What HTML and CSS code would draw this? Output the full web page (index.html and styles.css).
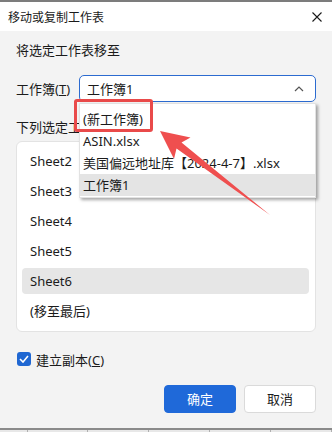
FILE: index.html
```html
<!DOCTYPE html>
<html>
<head lang="zh">
    <meta charset="UTF-8">
    <title>移动或复制工作表</title>
    <link rel="stylesheet" href="styles.css">
</head>
<body>
<div id="dialog">
    <div class="titlebar">
        <span class="title">移动或复制工作表</span>
        <svg class="close" width="10" height="10" viewBox="0 0 10 10">
            <path d="M0.5 0.5 L9.5 9.5 M9.5 0.5 L0.5 9.5" stroke="#1a1a1a" stroke-width="1.1" fill="none"/>
        </svg>
    </div>
    <div class="main">
        <div class="caption">将选定工作表移至</div>
        <div class="book-row">
            <span class="label">工作簿(<u>T</u>)</span>
            <div class="combo">
                <span>工作簿1</span>
                <svg width="10" height="6" viewBox="0 0 10 6">
                    <path d="M1 5 L5 1 L9 5" stroke="#555" stroke-width="1.2" fill="none"/>
                </svg>
            </div>
        </div>
        <div class="list-label">下列选定工作表之前(<u>B</u>):</div>
        <ul class="sheets">
            <li>Sheet2</li>
            <li>Sheet3</li>
            <li>Sheet4</li>
            <li>Sheet5</li>
            <li class="current">Sheet6</li>
            <li>(移至最后)</li>
        </ul>
        <div class="copy-row">
            <span class="check">
                <svg width="10" height="8" viewBox="0 0 10 8">
                    <path d="M1 4 L4 7 L9 1" stroke="#fff" stroke-width="1.6" fill="none"/>
                </svg>
            </span>
            <span>建立副本(<u>C</u>)</span>
        </div>
        <div class="buttons">
            <span class="btn primary">确定</span>
            <span class="btn">取消</span>
        </div>
    </div>

    <ul class="dropdown">
        <li>(新工作簿)</li>
        <li>ASIN.xlsx</li>
        <li>美国偏远地址库【2024-4-7】.xlsx</li>
        <li class="hover">工作簿1</li>
    </ul>
    <div class="mark"></div>
    <svg class="arrow" width="332" height="428" viewBox="0 0 332 428">
        <polygon points="160,131 190.5,137.5 181.5,142.5 270,215 176.5,148.5 174,159" fill="#ef4f4f"/>
    </svg>
</div>
<div class="sheetbar">
    <span></span><span></span><span></span><span></span><span></span><span></span>
</div>
</body>
</html>
```

FILE: styles.css
```css
* {
    margin: 0;
    padding: 0;
    box-sizing: border-box;
}
ul {
    list-style: none;
}
body {
    width: 332px;
    height: 432px;
    overflow: hidden;
    font-family: "Noto Sans", "Noto Sans CJK SC", sans-serif;
    font-size: 13px;
    color: #1b1b1b;
    background: #f3f3f3;
}
#dialog {
    position: relative;
    height: 430px;
    border-top: 2px solid #7c7c7c;
    border-bottom: 2px solid #8a8a8a;
    background: #f3f3f3;
}
.titlebar {
    height: 29px;
    background: #fff;
    display: flex;
    align-items: center;
    justify-content: space-between;
    padding: 0 10px 0 8px;
}
.title {
    font-size: 12px;
}
.main {
    padding: 0 16px;
}
.caption {
    margin-top: 9px;
    line-height: 20px;
}
.book-row {
    margin-top: 15px;
    display: flex;
    align-items: center;
}
.label {
    width: 63px;
}
.combo {
    flex: 1;
    height: 27px;
    background: #fff;
    border: 1px solid #2c6bd0;
    border-radius: 5px;
    display: flex;
    align-items: center;
    justify-content: space-between;
    padding: 0 11px 0 7px;
}
.list-label {
    margin-top: 15px;
    line-height: 20px;
}
.sheets {
    margin-top: 4px;
    height: 191px;
    background: #fff;
    border: 1px solid #e3e3e3;
    border-radius: 6px;
    padding: 6px 6px 0 5px;
    display: flex;
    flex-direction: column;
    gap: 4px;
}
.sheets li {
    height: 26px;
    line-height: 26px;
    padding-left: 8px;
    border-radius: 4px;
}
.sheets li.current {
    background: #e6e6e6;
}
.copy-row {
    margin-top: 17px;
    height: 20px;
    display: flex;
    align-items: center;
    padding-left: 1px;
}
.check {
    width: 14px;
    height: 14px;
    border-radius: 3px;
    background: #1f67d2;
    display: flex;
    align-items: center;
    justify-content: center;
    margin-right: 5px;
}
.buttons {
    margin-top: 16px;
    display: flex;
    justify-content: flex-end;
    gap: 8px;
}
.btn {
    width: 72px;
    height: 28px;
    line-height: 26px;
    text-align: center;
    border-radius: 4px;
    background: #fff;
    border: 1px solid #dadada;
}
.btn.primary {
    background: #1f69d9;
    border-color: #1f69d9;
    color: #fff;
}
.dropdown {
    position: absolute;
    left: 79px;
    top: 101px;
    width: 237px;
    height: 95px;
    background: #fff;
    border: 1px solid #e2e2e2;
    box-shadow: 2px 2px 3px rgba(0, 0, 0, 0.35);
    padding-top: 4px;
}
.dropdown li {
    height: 22px;
    line-height: 22px;
    padding-left: 3px;
    white-space: nowrap;
}
.dropdown li.hover {
    background: #e4e4e4;
}
.mark {
    position: absolute;
    left: 74px;
    top: 97px;
    width: 79px;
    height: 33px;
    border: 3px solid #e94a4a;
    border-radius: 3px;
}
.arrow {
    position: absolute;
    left: 0;
    top: -2px;
}
.sheetbar {
    height: 2px;
    display: flex;
    background: #e8e8e8;
}
.sheetbar span {
    width: 73px;
    border-right: 1px solid #b0b0b0;
}
.sheetbar span:first-child {
    width: 33px;
}
```
